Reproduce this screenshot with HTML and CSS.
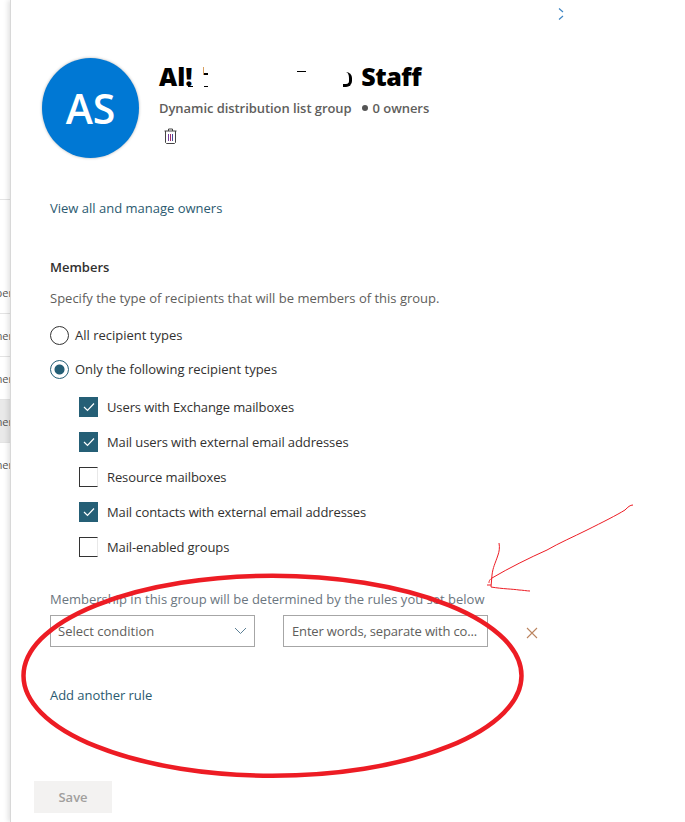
FILE: index.html
```html
<!DOCTYPE html>
<html lang="en">
<head>
<meta charset="utf-8">
<title>All Staff</title>
<link rel="stylesheet" href="styles.css">
</head>
<body>
<div class="screen">
  <aside class="backdrop">
    <div class="row r1"><span>ber</span></div>
    <div class="row"><span>mer</span></div>
    <div class="row"><span>mer</span></div>
    <div class="row sel"><span>mer</span></div>
    <div class="row"><span>mer</span></div>
  </aside>
  <main class="panel">
    <div class="topbar">
      <svg class="chev" width="6" height="12" viewBox="0 0 6 12"><path d="M1 .5l4 3.5M5 8l-4 3.5" fill="none" stroke="#3f86c4" stroke-width="1.2"/></svg>
    </div>
    <header class="head">
      <div class="avatar">AS</div>
      <div class="info">
        <h1 class="title"><span>Al!</span><span class="t-end">Staff</span><i class="frag f1"></i><i class="frag f2"></i><i class="frag f3"></i><i class="frag f4"></i><i class="frag f5"></i><i class="frag f6"></i></h1>
        <p class="meta"><span>Dynamic distribution list group</span><span class="dot"></span><span>0 owners</span></p>
        <svg class="trash" width="13" height="16" viewBox="0 0 13 16" fill="none"><path d="M.5 3h12M4.5 3V1h4v2M1.5 3v11.5l1 1h8l1-1V3" stroke="#444" stroke-width="1"/><path d="M4.5 6v7" stroke="#7a3fa0"/><path d="M6.5 6v7" stroke="#a0306a"/><path d="M8.5 6v7" stroke="#4a4a9a"/></svg>
      </div>
    </header>
    <a class="link owners">View all and manage owners</a>
    <h2 class="section">Members</h2>
    <p class="desc">Specify the type of recipients that will be members of this group.</p>
    <div class="radios">
      <label class="radio"><span class="rb"></span>All recipient types</label>
      <label class="radio"><span class="rb on"></span>Only the following recipient types</label>
    </div>
    <div class="checks">
      <label class="check"><span class="cb on"><svg width="12" height="10" viewBox="0 0 12 10"><path d="M1 5l3.5 3.5L11 1.5" fill="none" stroke="#fff" stroke-width="1.2"/></svg></span>Users with Exchange mailboxes</label>
      <label class="check"><span class="cb on"><svg width="12" height="10" viewBox="0 0 12 10"><path d="M1 5l3.5 3.5L11 1.5" fill="none" stroke="#fff" stroke-width="1.2"/></svg></span>Mail users with external email addresses</label>
      <label class="check"><span class="cb"></span>Resource mailboxes</label>
      <label class="check"><span class="cb on"><svg width="12" height="10" viewBox="0 0 12 10"><path d="M1 5l3.5 3.5L11 1.5" fill="none" stroke="#fff" stroke-width="1.2"/></svg></span>Mail contacts with external email addresses</label>
      <label class="check"><span class="cb"></span>Mail-enabled groups</label>
    </div>
    <p class="rule-label">Membership in this group will be determined by the rules you set below</p>
    <div class="rule">
      <div class="field select"><span>Select condition</span><svg width="13" height="8" viewBox="0 0 13 8"><path d="M1 1l5.5 5.5L12 1" fill="none" stroke="#5b7f95" stroke-width="1"/></svg></div>
      <div class="field input"><span>Enter words, separate with co...</span></div>
      <svg class="remove" width="12" height="12" viewBox="0 0 12 12"><path d="M1 1l10 10M11 1L1 11" stroke="#bb8560" stroke-width="1.1"/></svg>
    </div>
    <a class="link add">Add another rule</a>
    <button class="save">Save</button>
  </main>
  <svg class="ink" width="685" height="822" viewBox="0 0 685 822" fill="none">
    <ellipse cx="272.5" cy="675.75" rx="249" ry="100" stroke="#ed1c24" stroke-width="4.5"/>
    <path d="M633 505c-3 0-5 2-8 5-8 5-22 12-38 20-14 7-28 13-40 20-18 8-38 18-55 28-3 2-3 4-3 5M499 543c1 5 0 9-1 12-3 9-5 12-6 20l-1 12c12 2 22 2 28 3 3 0 8 1 11 1M487 585h4" stroke="#ed1c24" stroke-width="1"/>
  </svg>
</div>
</body>
</html>
```
FILE: styles.css
```css
* { box-sizing: border-box; }
html, body { margin: 0; padding: 0; }
body {
  width: 685px;
  height: 822px;
  overflow: hidden;
  background: #fff;
  font-family: "Open Sans", "Noto Sans", sans-serif;
  font-size: 13px;
  color: #323130;
}
.screen { position: relative; display: flex; width: 685px; height: 822px; overflow: hidden; }
.backdrop { width: 10px; flex: none; padding-top: 199px; background: #fff; overflow: hidden; }
.row { height: 43px; border-top: 1px solid #e4e4e4; display: flex; align-items: center; justify-content: flex-end; font-size: 11px; color: #555; white-space: nowrap; overflow: hidden; }
.row.r1 { height: 114px; align-items: flex-end; padding-bottom: 13px; }
.row.sel { background: #e9e9e9; }
.row span { flex: none; margin-right: -3px; }
.panel { flex: 1; display: flex; flex-direction: column; min-width: 0; padding-left: 39px; border-left: 1px solid #d8d8d8; box-shadow: -2px 0 5px rgba(0,0,0,.12); background: #fff; }
.topbar { height: 58px; position: relative; flex: none; }
.chev { position: absolute; left: 508px; top: 8px; }
.head { display: flex; gap: 20px; margin-left: -8px; height: 141px; flex: none; }
.avatar { width: 97px; height: 100px; border-radius: 50%; background: #0078d4; color: #fff; font-size: 41px; font-weight: 600; display: flex; align-items: center; justify-content: center; box-shadow: 0 0 3px rgba(0,0,0,.3); flex: none; }
.info { width: 270px; padding-top: 2px; display: flex; flex-direction: column; }
.title { position: relative; display: flex; width: 262px; justify-content: space-between; margin: 0; font-size: 25px; line-height: 33px; font-weight: 800; color: #000; }
.t-end { letter-spacing: -.5px; }
.frag { position: absolute; display: block; background: #000; }
.f1 { left: 44px; top: 7px; width: 1px; height: 8px; background: #d9a060; }
.f2 { left: 45px; top: 13px; width: 4px; height: 2px; }
.f3 { left: 45px; top: 26px; width: 4px; height: 1px; }
.f4 { left: 29px; top: 26px; width: 5px; height: 1px; }
.f5 { left: 138px; top: 11px; width: 9px; height: 1px; }
.f6 { left: 184px; top: 12px; width: 9px; height: 15px; background: transparent; border: solid #000; border-width: 0 3px 3px 0; border-radius: 0 6px 6px 0; }
.meta { display: flex; align-items: center; margin: 6px 0 0; font-size: 13px; line-height: 18px; font-weight: 600; color: #605e5c; white-space: nowrap; letter-spacing: -.06px; }
.dot { flex: none; width: 6px; height: 6px; border-radius: 50%; background: #555; margin: 0 5px 0 10px; }
.trash { margin: 11px 0 0 5px; }
.link { color: #2b5a70; }
.owners { line-height: 18px; }
.section { margin: 41px 0 0; font-size: 13px; line-height: 18px; font-weight: 600; color: #323130; }
.desc { margin: 13px 0 0; line-height: 18px; color: #605e5c; }
.radios { display: flex; flex-direction: column; gap: 14px; margin-top: 18px; }
.radio { display: flex; align-items: center; gap: 6px; height: 20px; }
.rb { width: 19px; height: 19px; border-radius: 50%; border: 1px solid #333; display: block; }
.rb.on { border-color: #255f76; background: radial-gradient(circle, #255f76 0 4.5px, #fff 5.5px); }
.checks { display: flex; flex-direction: column; gap: 15px; margin: 18px 0 0 29px; }
.check { display: flex; align-items: center; gap: 9px; height: 20px; letter-spacing: -.11px; }
.cb { width: 19px; height: 20px; border: 1px solid #333; border-right-color: #e8e8e8; display: flex; align-items: center; justify-content: center; }
.cb.on { background: #255f76; border-color: #255f76; }
.rule-label { margin: 33px 0 0; line-height: 18px; color: #6b7680; white-space: nowrap; }
.rule { display: flex; align-items: center; margin-top: 7px; }
.field { height: 32px; border: 1px solid #a6a6a6; display: flex; align-items: center; justify-content: space-between; color: #605e5c; white-space: nowrap; }
.select { width: 205px; padding: 0 7px; }
.input { width: 205px; margin-left: 28px; padding: 0 8px; letter-spacing: -.16px; }
.remove { margin: 4px 0 0 38px; }
.add { margin-top: 39px; line-height: 18px; letter-spacing: -.05px; }
.save { width: 78px; height: 32px; margin: 77px 0 0 -16px; border: 0; background: #f3f2f1; color: #a19f9d; font: 600 13px "Open Sans", "Noto Sans", sans-serif; padding: 0; }
.ink { position: absolute; left: 0; top: 0; pointer-events: none; }
```
